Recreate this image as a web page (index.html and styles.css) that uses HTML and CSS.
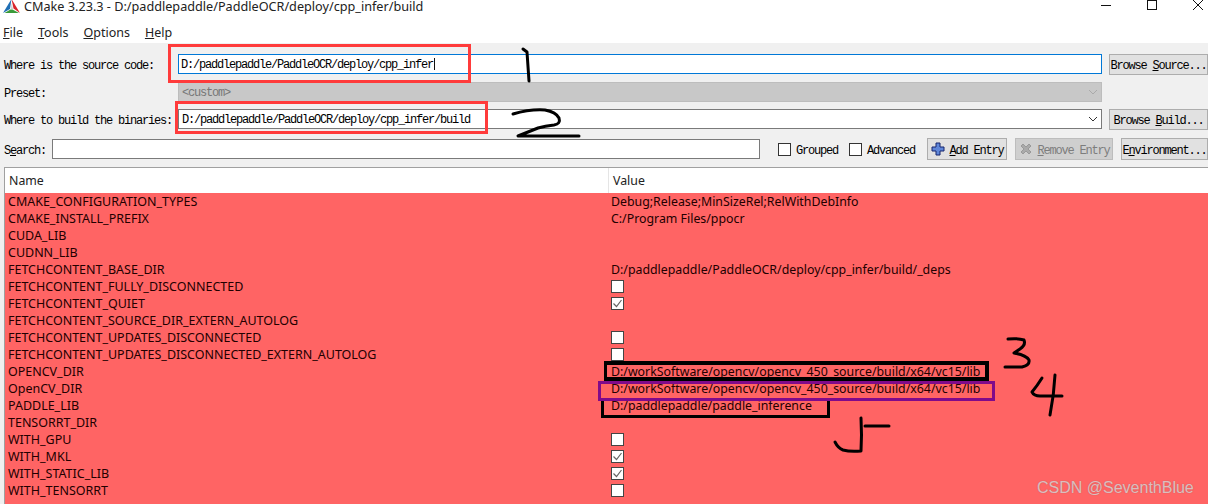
FILE: index.html
```html
<!DOCTYPE html>
<html lang="en">
<head>
<meta charset="utf-8">
<title>CMake 3.23.3</title>
<link rel="stylesheet" href="styles.css">
</head>
<body>
<div class="window">
  <header class="titlebar">
    <svg class="logo" viewBox="0 0 17 13"><polygon points="8.5,-1 0,13 7,9" fill="#1f6fb5"/><polygon points="8.5,-1 17,13 10.5,8.5" fill="#d8232a"/><polygon points="1.5,13 16,13 9.5,9.5 7.5,9.5" fill="#3a9a3a"/><polygon points="8.7,3 7.8,9 10,9" fill="#d0d0d0"/></svg>
    <span class="title">CMake 3.23.3 - D:/paddlepaddle/PaddleOCR/deploy/cpp_infer/build</span>
    <div class="winctl">
      <svg viewBox="0 0 12 12"><path d="M1 5.5H11" stroke="#111" fill="none"/></svg>
      <svg viewBox="0 0 12 12"><rect x="1.5" y="0.5" width="9" height="9" stroke="#111" fill="none"/></svg>
      <svg viewBox="0 0 12 12"><path d="M1 0L11 10M11 0L1 10" stroke="#111" fill="none"/></svg>
    </div>
  </header>
  <nav class="menubar"><span><u>F</u>ile</span><span><u>T</u>ools</span><span><u>O</u>ptions</span><span><u>H</u>elp</span></nav>
  <section class="form">
    <div class="row r1">
      <label class="lab">Where is the source code:</label>
      <div class="field focus">D:/paddlepaddle/PaddleOCR/deploy/cpp_infer<i class="caret"></i></div>
      <button class="btn browse"><span>Browse <u>S</u>ource...</span></button>
    </div>
    <div class="row r2">
      <label class="lab">Preset:</label>
      <div class="field disabled">&lt;custom&gt;<svg class="chev" viewBox="0 0 10 6"><path d="M1 1L5 5L9 1" stroke="#aaa" fill="none"/></svg></div>
      <div class="spacer"></div>
    </div>
    <div class="row r3">
      <label class="lab">Where to build the binaries:</label>
      <div class="field">D:/paddlepaddle/PaddleOCR/deploy/cpp_infer/build<svg class="chev" viewBox="0 0 10 6"><path d="M1 1L5 5L9 1" stroke="#333" fill="none"/></svg></div>
      <button class="btn browse"><span>Browse <u>B</u>uild...</span></button>
    </div>
    <div class="row r4">
      <label class="lab short">S<u>e</u>arch:</label>
      <div class="field search"></div>
      <label class="check"><i class="box"></i><span class="lt">Grouped</span></label>
      <label class="check adv"><i class="box"></i><span class="lt">Advanced</span></label>
      <button class="btn add"><svg viewBox="0 0 14 14"><path d="M5 1H9V5H13V9H9V13H5V9H1V5H5Z" fill="#5f86d8" stroke="#14246e"/></svg><span><u>A</u>dd Entry</span></button>
      <button class="btn remove" disabled><svg viewBox="0 0 14 14"><path d="M2 4L4 2L7 5L10 2L12 4L9 7L12 10L10 12L7 9L4 12L2 10L5 7Z" fill="#aaa" stroke="#999"/></svg><span><u>R</u>emove Entry</span></button>
      <button class="btn env"><span>E<u>n</u>vironment...</span></button>
    </div>
  </section>
  <section class="table">
    <div class="thead"><div class="th">Name</div><div class="th second">Value</div></div>
    <div class="tbody">
      <div class="tr"><div>CMAKE_CONFIGURATION_TYPES</div><div>Debug;Release;MinSizeRel;RelWithDebInfo</div></div>
      <div class="tr"><div>CMAKE_INSTALL_PREFIX</div><div>C:/Program Files/ppocr</div></div>
      <div class="tr"><div>CUDA_LIB</div><div></div></div>
      <div class="tr"><div>CUDNN_LIB</div><div></div></div>
      <div class="tr"><div>FETCHCONTENT_BASE_DIR</div><div>D:/paddlepaddle/PaddleOCR/deploy/cpp_infer/build/_deps</div></div>
      <div class="tr"><div>FETCHCONTENT_FULLY_DISCONNECTED</div><div><i class="cb"></i></div></div>
      <div class="tr"><div>FETCHCONTENT_QUIET</div><div><i class="cb on"><svg viewBox="0 0 11 11"><path d="M1.5 5.5L4.5 8.5L9.5 2" stroke="#666" stroke-width="1.2" fill="none"/></svg></i></div></div>
      <div class="tr"><div>FETCHCONTENT_SOURCE_DIR_EXTERN_AUTOLOG</div><div></div></div>
      <div class="tr"><div>FETCHCONTENT_UPDATES_DISCONNECTED</div><div><i class="cb"></i></div></div>
      <div class="tr"><div>FETCHCONTENT_UPDATES_DISCONNECTED_EXTERN_AUTOLOG</div><div><i class="cb"></i></div></div>
      <div class="tr"><div>OPENCV_DIR</div><div>D:/workSoftware/opencv/opencv_450_source/build/x64/vc15/lib</div></div>
      <div class="tr"><div>OpenCV_DIR</div><div>D:/workSoftware/opencv/opencv_450_source/build/x64/vc15/lib</div></div>
      <div class="tr"><div>PADDLE_LIB</div><div>D:/paddlepaddle/paddle_inference</div></div>
      <div class="tr"><div>TENSORRT_DIR</div><div></div></div>
      <div class="tr"><div>WITH_GPU</div><div><i class="cb"></i></div></div>
      <div class="tr"><div>WITH_MKL</div><div><i class="cb on"><svg viewBox="0 0 11 11"><path d="M1.5 5.5L4.5 8.5L9.5 2" stroke="#666" stroke-width="1.2" fill="none"/></svg></i></div></div>
      <div class="tr"><div>WITH_STATIC_LIB</div><div><i class="cb on"><svg viewBox="0 0 11 11"><path d="M1.5 5.5L4.5 8.5L9.5 2" stroke="#666" stroke-width="1.2" fill="none"/></svg></i></div></div>
      <div class="tr"><div>WITH_TENSORRT</div><div><i class="cb"></i></div></div>
    </div>
  </section>
</div>
<div class="mark m1"></div>
<div class="mark m2"></div>
<div class="mark m3"></div>
<div class="mark m5"></div>
<div class="mark m4"></div>
<svg class="ink" viewBox="0 0 1208 504">
  <g fill="none" stroke="#000" stroke-width="3" stroke-linecap="round" stroke-linejoin="round">
    <path d="M523 49L527 52L529 81"/>
    <path d="M513 114Q530 109 545 110Q556 112 559 118Q561 124 554 125Q545 126 538 128Q528 132 518 136L579 136"/>
    <path d="M1008 339Q1018 338 1024 340Q1026 345 1020 349L1014 353Q1026 355 1029 360Q1030 365 1022 367L1005 367"/>
    <path d="M1042 378Q1037 386 1032 392Q1034 396 1040 396L1062 396M1055 375Q1054 395 1050 415"/>
    <path d="M861 418Q862 435 861 451Q850 452 843 450Q838 448 835 442M865 426L889 426"/>
  </g>
</svg>
<div class="watermark">CSDN @SeventhBlue</div>
</body>
</html>
```

FILE: styles.css
```css
* { box-sizing: border-box; }
html, body { margin: 0; padding: 0; }
body { width: 1208px; height: 504px; overflow: hidden; background: #fff; font-family: "Noto Sans", sans-serif; position: relative; }
.window { width: 1208px; height: 504px; display: flex; flex-direction: column; background: #f0f0f0; }
.titlebar { height: 17px; background: #fff; display: flex; align-items: flex-start; padding-left: 3px; }
.logo { width: 17px; height: 13px; flex: none; }
.title { font: 12.66px/13px "Noto Sans", sans-serif; color: #222; margin-left: 4px; }
.winctl { margin-left: auto; display: flex; gap: 34px; margin-right: 4px; }
.winctl svg { width: 12px; height: 12px; }
.menubar { height: 26px; background: #fff; display: flex; gap: 15px; padding: 7px 0 0 3px; font: 12.5px "Noto Sans", sans-serif; color: #222; }
.form { height: 124px; font: 12px "Liberation Mono", monospace; letter-spacing: -1.2px; color: #000; }
.row { display: flex; align-items: center; }
.r1 { padding-top: 11px; height: 31px; }
.r2 { padding-top: 8px; height: 28px; }
.r3 { padding-top: 7px; height: 27px; }
.r4 { padding-top: 10px; height: 30px; }
.lab { width: 178px; padding: 3px 0 0 4px; flex: none; }
.lab.short { width: 52px; }
.field { width: 924px; height: 20px; background: #fff; border: 1px solid #7a7a7a; padding: 1px 0 0 3px; line-height: 18px; flex: none; position: relative; }
.focus { border-color: #0078d7; padding-left: 2px; }
.caret { display: inline-block; width: 1px; height: 12px; background: #111; vertical-align: -2px; margin-left: 1px; }
.disabled { background: #c8c8c8; border-color: #bdbdbd; color: #777; }
.chev { position: absolute; right: 3px; top: 6px; width: 10px; height: 6px; }
.spacer { width: 108px; }
.btn { font: inherit; letter-spacing: inherit; background: #e1e1e1; border: 1px solid #adadad; color: #000; padding: 3px 0 0; height: 21px; display: inline-flex; align-items: center; justify-content: center; flex: none; white-space: nowrap; }
.browse { width: 99px; margin-left: 7px; }
.search { width: 708px; }
.check { display: flex; align-items: center; gap: 5px; margin-left: 18px; flex: none; }
.check.adv { margin-left: 11px; }
.lt { padding-top: 3px; }
.box { display: block; width: 13px; height: 13px; background: #fff; border: 1px solid #333; }
.add { width: 80px; margin-left: 12px; height: 22px; gap: 5px; }
.add svg, .remove svg { width: 14px; height: 14px; margin-top: -3px; }
.remove { width: 98px; margin-left: 8px; height: 22px; gap: 5px; background: #cfcfcf; border-color: #bdbdbd; color: #7d7d7d; }
.env { width: 87px; margin-left: 8px; height: 22px; }
.table { margin: 0 0 0 4px; width: 1204px; height: 337px; border-top: 1px solid #a0a0a0; border-left: 1px solid #a0a0a0; background: #fff; font: 12.35px "Noto Sans", sans-serif; color: #200; flex: none; }
.thead { height: 25px; display: grid; grid-template-columns: 603px 1fr; background: #fff; }
.th { padding: 4px 0 0 4px; color: #222; }
.th.second { border-left: 1px solid #e5e5e5; padding-left: 4px; }
.tbody { background: #ff6464; height: 312px; }
.tr { height: 17px; display: grid; grid-template-columns: 603px 1fr; line-height: 17px; padding-left: 3px; white-space: nowrap; }
.tr > div:first-child { font-size: 12.49px; }
.cb { display: block; width: 13px; height: 13px; margin: 2px 0 0 0; background: #fff; border: 1px solid #444; }
.cb svg { display: block; width: 11px; height: 11px; }
.mark { position: absolute; border: 3px solid #ff3b3b; }
.m1 { left: 168px; top: 44px; width: 303px; height: 39px; }
.m2 { left: 175px; top: 101px; width: 313px; height: 33px; }
.m3 { left: 604px; top: 361px; width: 385px; height: 20px; border-color: #000; border-width: 4px 4px 4px 3px; }
.m4 { left: 598px; top: 381px; width: 397px; height: 20px; border-color: #800a8a; }
.m5 { left: 601px; top: 400px; width: 229px; height: 18px; border-color: #000; border-top: none; }
.ink { position: absolute; left: 0; top: 0; width: 1208px; height: 504px; pointer-events: none; }
.watermark { position: absolute; left: 1037px; top: 479px; font: 16px "Liberation Sans", sans-serif; color: rgba(255,255,255,.6); text-shadow: 0 0 1px rgba(90,90,90,.6); }
```
